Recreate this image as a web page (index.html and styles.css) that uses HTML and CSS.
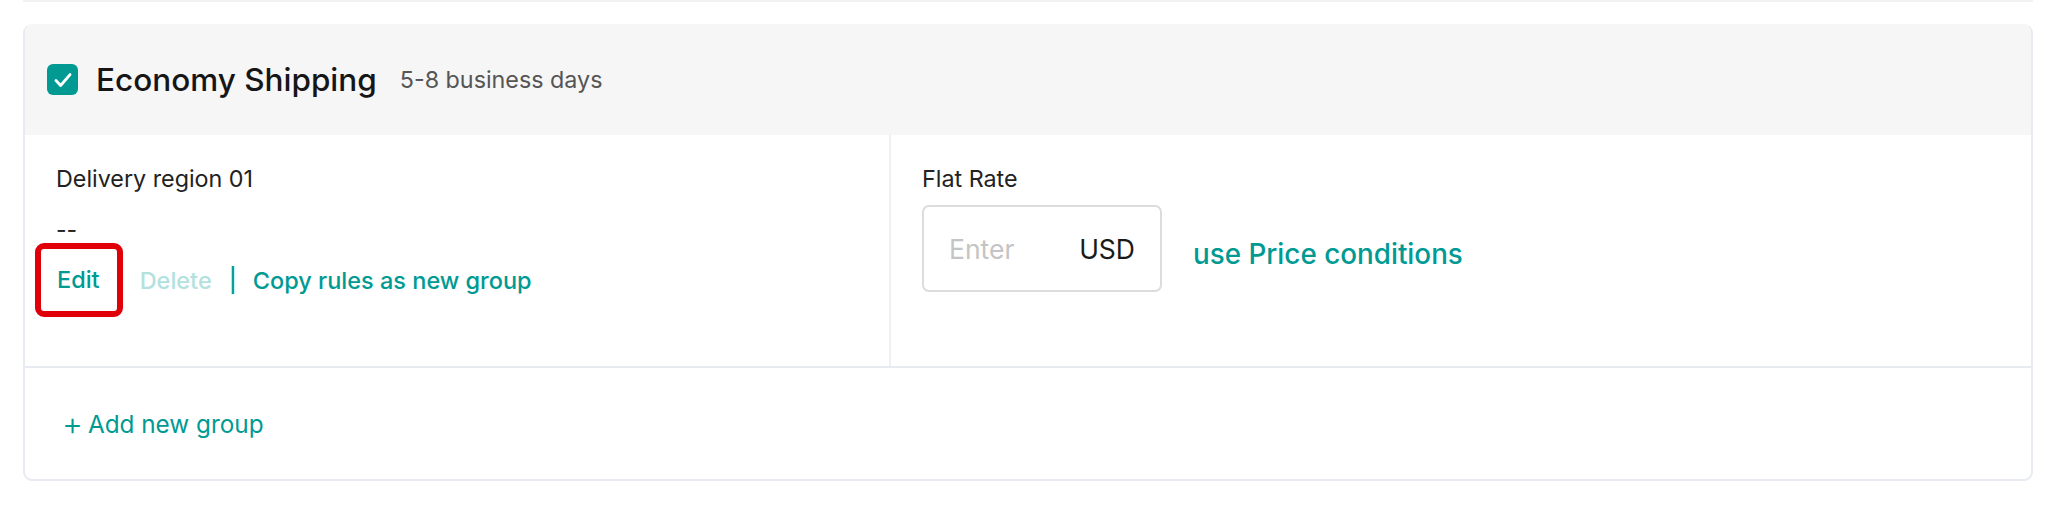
FILE: index.html
```html
<!DOCTYPE html>
<html lang="en">
<head>
<meta charset="utf-8">
<title>Shipping</title>
<link rel="stylesheet" href="styles.css">
</head>
<body>
<div class="page">
  <div class="prev-card"></div>
  <section class="card">
    <header class="card-head">
      <span class="checkbox">
        <svg viewBox="0 0 24 24" width="26" height="26"><path d="M5.5 12.5l4.3 4.6L18.5 7" fill="none" stroke="#fff" stroke-width="2.6" stroke-linecap="round" stroke-linejoin="round"/></svg>
      </span>
      <h2 class="title">Economy Shipping</h2>
      <span class="subtitle">5-8 business days</span>
    </header>
    <div class="group-row">
      <div class="col col-region">
        <div class="label">Delivery region 01</div>
        <div class="value">--</div>
        <div class="actions">
          <a class="link link-edit">Edit</a>
          <a class="link link-disabled">Delete</a>
          <span class="sep">|</span>
          <a class="link">Copy rules as new group</a>
        </div>
      </div>
      <div class="col col-rate">
        <div class="label">Flat Rate</div>
        <div class="rate-line">
          <div class="input">
            <span class="placeholder">Enter</span>
            <span class="unit">USD</span>
          </div>
          <a class="link link-big">use Price conditions</a>
        </div>
      </div>
    </div>
    <footer class="card-foot">
      <a class="link link-add"><span class="plus">+</span>Add new group</a>
    </footer>
  </section>
</div>
</body>
</html>
```

FILE: styles.css
```css
* { box-sizing: border-box; }
html, body { margin: 0; padding: 0; background: #fff; }
body {
  font-family: Inter, Roboto, "Liberation Sans", Arial, sans-serif;
  color: #1f1f1f;
}
.page {
  padding: 0 29px 0 23px;
}
.prev-card {
  height: 2px;
  background: #f1f2f4;
  margin-bottom: 22px;
}
.card {
  border: 2px solid #e7eaf0;
  border-top: none;
  border-radius: 9px;
  overflow: hidden;
}
.card-head {
  background: #f6f6f6;
  height: 111px;
  display: flex;
  align-items: center;
  padding-left: 22px;
}
.checkbox {
  width: 31px;
  height: 31px;
  border-radius: 6px;
  background: #009a93;
  display: inline-flex;
  align-items: center;
  justify-content: center;
  margin-right: 18px;
}
.title {
  margin: 0;
  font-size: 31.5px;
  font-weight: 500;
  color: #161616;
  margin-right: 23px;
}
.subtitle {
  font-size: 23.3px;
  color: #555;
}
.group-row {
  display: grid;
  grid-template-columns: 866px 1fr;
  height: 233px;
  border-bottom: 2px solid #e7eaf0;
}
.col {
  padding: 30px 31px 0;
}
.col-region {
  border-right: 2px solid #eef0f4;
}
.label {
  font-size: 23.3px;
  color: #222;
  line-height: 28px;
}
.value {
  font-size: 23px;
  color: #222;
  line-height: 28px;
  margin-top: 23px;
}
.actions {
  display: flex;
  align-items: center;
  margin-top: 5px;
  height: 62px;
  font-size: 23.5px;
  font-weight: 500;
}
.link {
  color: #009a93;
  text-decoration: none;
  font-weight: 500;
}
.link-edit {
  outline: 6px solid #e0000a;
  outline-offset: 0;
  border-radius: 3px;
  padding: 17px 17px 17px 16px;
  margin-left: -15px;
  margin-right: 23px;
  line-height: 28px;
}
.link-disabled {
  color: #b3e1de;
}
.sep {
  color: #009a93;
  margin: 0 16px 0 17px;
}
.rate-line {
  display: flex;
  align-items: center;
  margin-top: 12px;
}
.input {
  width: 240px;
  height: 87px;
  border: 2px solid #dcdcdc;
  border-radius: 7px;
  display: flex;
  align-items: center;
  justify-content: space-between;
  padding: 0 25px 0 25px;
  font-size: 26.5px;
}
.placeholder { color: #c4c4c4; }
.unit { color: #1a1a1a; }
.link-big {
  font-size: 27.8px;
  margin-left: 31px;
  margin-top: 10px;
}
.card-foot {
  height: 111px;
  display: flex;
  align-items: center;
  padding-left: 37px;
}
.link-add {
  font-size: 24.3px;
  font-weight: 400;
  display: flex;
  align-items: center;
}
.plus {
  font-size: 32px;
  font-weight: 300;
  margin-right: 5px;
  line-height: 1;
}
```
